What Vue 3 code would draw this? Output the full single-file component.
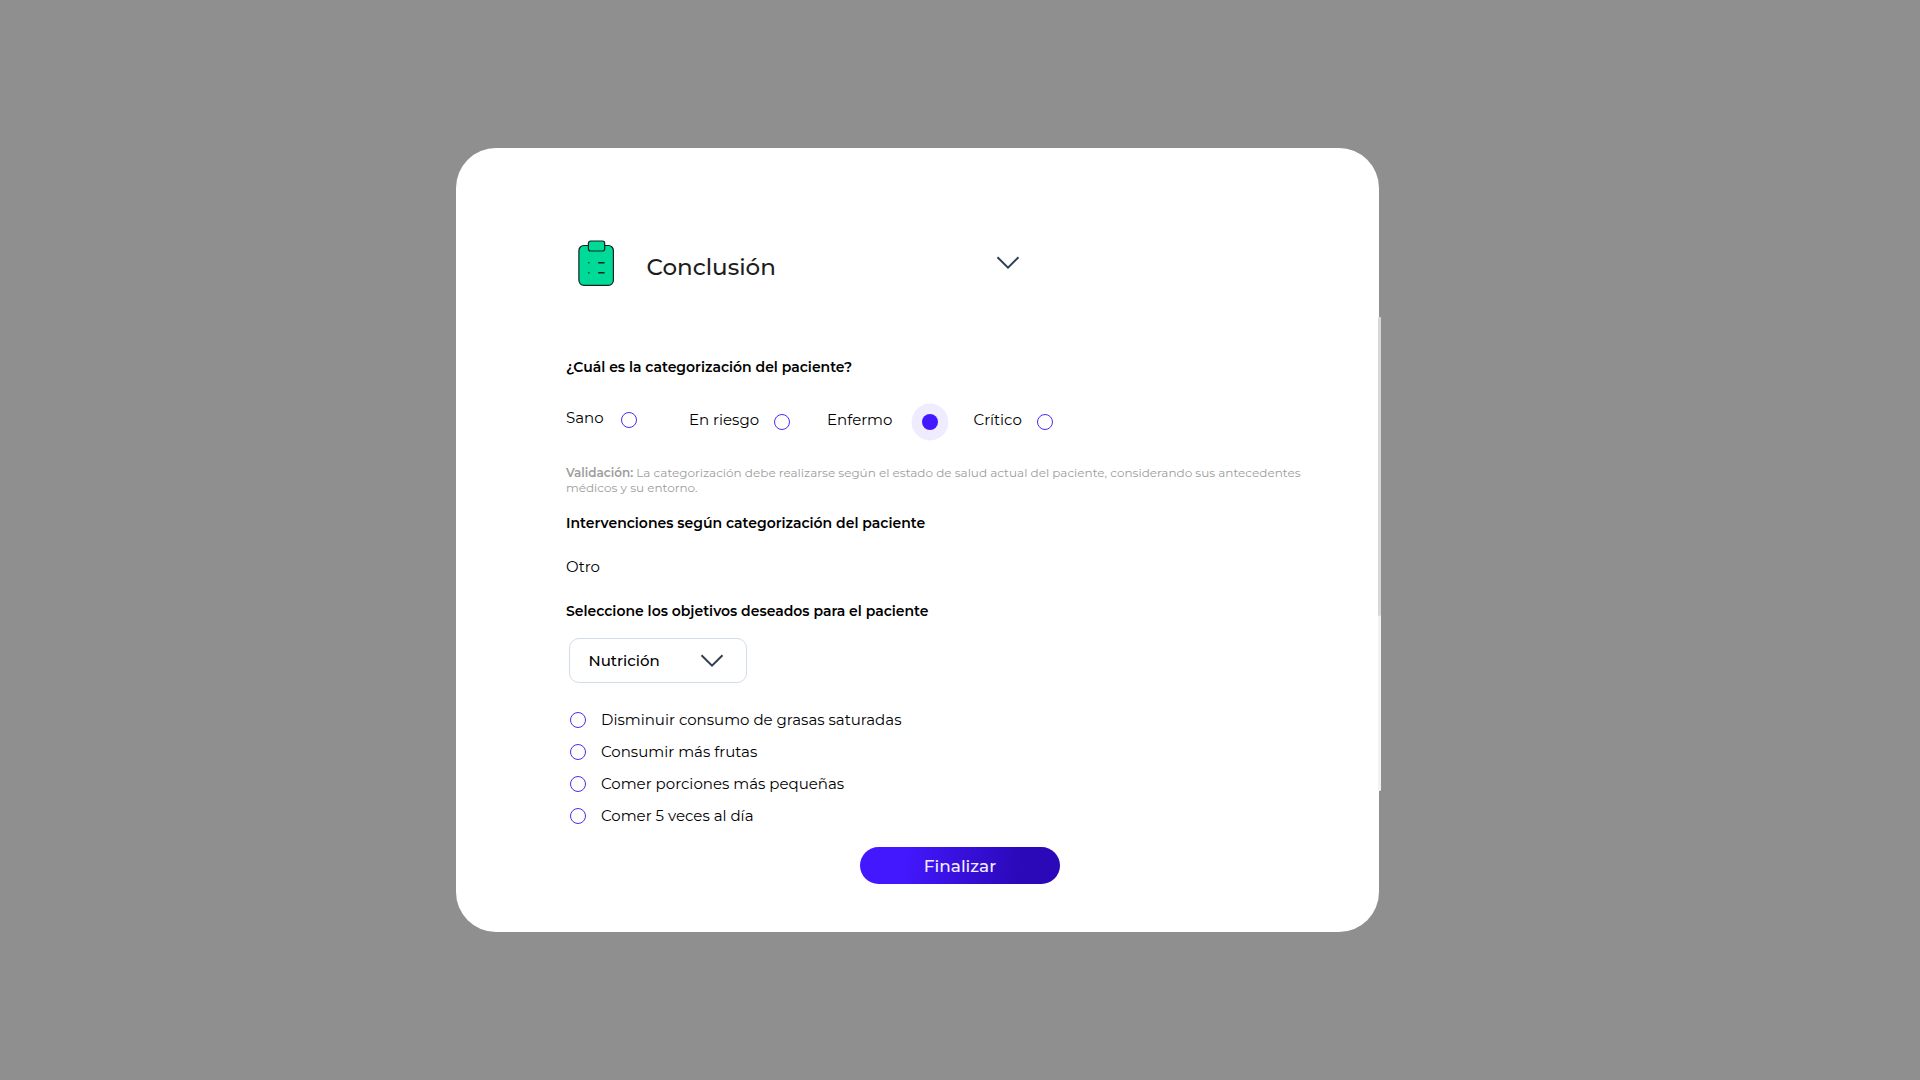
<script setup>
import { ref } from 'vue'

const categories = [
  { id: 'sano', label: 'Sano' },
  { id: 'riesgo', label: 'En riesgo' },
  { id: 'enfermo', label: 'Enfermo' },
  { id: 'critico', label: 'Crítico' },
]
const category = ref('enfermo')

const goals = [
  { id: 'grasas', label: 'Disminuir consumo de grasas saturadas' },
  { id: 'frutas', label: 'Consumir más frutas' },
  { id: 'porciones', label: 'Comer porciones más pequeñas' },
  { id: 'veces', label: 'Comer 5 veces al día' },
]
</script>

<template>
  <main class="backdrop">
    <section class="dialog">
      <header class="head">
        <svg class="clipboard" width="38" height="48" viewBox="0 0 38 48">
          <rect x="1.9" y="5.5" width="34.5" height="39.8" rx="5" />
          <rect x="11.4" y="1" width="16.3" height="10" rx="2.2" />
          <path d="M11.4 22.7h1M21.2 22.7h6.4M11.4 32.7h1M21.2 32.7h6.4" />
        </svg>
        <h1>Conclusión</h1>
        <svg class="chevron" width="24" height="14" viewBox="0 0 24 14">
          <path d="M1.5 1.2 12 11.6 22.5 1.2" />
        </svg>
      </header>

      <h2 class="question">¿Cuál es la categorización del paciente?</h2>
      <div class="categories">
        <div v-for="c in categories" :key="c.id" class="category" :class="c.id" @click="category = c.id">
          <span class="label">{{ c.label }}</span>
          <i class="radio" :class="{ on: category === c.id }"></i>
        </div>
      </div>

      <p class="note">
        <b>Validación:</b> La categorización debe realizarse según el estado de salud actual del paciente, considerando sus antecedentes<br />
        médicos y su entorno.
      </p>

      <h2 class="interventions">Intervenciones según categorización del paciente</h2>
      <p class="other">Otro</p>
      <h2 class="objectives">Seleccione los objetivos deseados para el paciente</h2>

      <div class="select">
        <span>Nutrición</span>
        <svg class="chevron" width="24" height="14" viewBox="0 0 24 14">
          <path d="M1.5 1.2 12 11.6 22.5 1.2" />
        </svg>
      </div>

      <ul class="goals">
        <li v-for="g in goals" :key="g.id">
          <i class="radio"></i>
          <span>{{ g.label }}</span>
        </li>
      </ul>

      <button class="finish">Finalizar</button>

      <div class="track"><div class="thumb"></div></div>
    </section>
  </main>
</template>

<style>
body {
  background: #8f8f8f;
}
</style>

<style scoped>
.backdrop {
  box-sizing: border-box;
  height: 1080px;
  padding: 148px 0 0 456px;
  background: #8f8f8f;
  font-family: Montserrat, Inter, sans-serif;
  color: #000;
}
.dialog {
  position: relative;
  box-sizing: border-box;
  width: 923px;
  height: 784px;
  padding: 92px 70px 0 110px;
  border-radius: 40px;
  background: #fff;
}
h1, h2, p, ul {
  margin: 0;
  padding: 0;
}
.head {
  display: flex;
  height: 48px;
}
.clipboard {
  flex: none;
  margin-left: 11px;
  fill: #00da98;
  stroke: #10231d;
  stroke-width: 1.2;
}
.clipboard path {
  stroke-width: 1.4;
}
h1 {
  width: 348.5px;
  margin: 12px 0 0 31.5px;
  font-size: 23px;
  line-height: 30px;
  font-weight: 500;
  color: #1d1d1d;
}
.chevron {
  flex: none;
  fill: none;
  stroke: #2e4052;
  stroke-width: 2;
}
.head .chevron {
  margin: 16px 0 0 1px;
}
h2 {
  font-size: 14px;
  line-height: 20px;
  font-weight: 600;
  white-space: nowrap;
}
.question {
  margin-top: 69px;
}
.categories {
  display: flex;
  height: 51px;
  margin-top: 31px;
}
.category {
  display: flex;
  margin-top: 2px;
}
.label {
  font-size: 15px;
  line-height: 20px;
  white-space: nowrap;
}
.radio {
  box-sizing: border-box;
  flex: none;
  width: 16px;
  height: 16px;
  border: 1px solid #4d2bf5;
  border-radius: 50%;
}
.radio.on {
  border: 0;
  background: #4318ff;
  box-shadow: 0 0 0 10.4px #f0ecff;
}
.category .radio {
  margin-top: 3.5px;
}
.sano {
  width: 123px;
  margin-top: 0;
}
.sano .label {
  width: 55px;
}
.riesgo {
  width: 138px;
}
.riesgo .label {
  width: 85px;
}
.enfermo {
  width: 146.5px;
}
.enfermo .label {
  width: 95px;
}
.critico .label {
  width: 63.5px;
}
.critico .radio {
  margin-top: 4px;
}
.note {
  margin-top: 6px;
  font-size: 12px;
  line-height: 15px;
  white-space: nowrap;
  color: #9d9d9d;
}
.note b {
  font-weight: 600;
}
.interventions {
  margin-top: 18px;
}
.other {
  margin-top: 24px;
  font-size: 15px;
  line-height: 20px;
}
.objectives {
  margin-top: 24px;
}
.select {
  box-sizing: border-box;
  display: flex;
  align-items: center;
  width: 178px;
  height: 45px;
  margin: 17px 0 0 3px;
  padding-left: 18.5px;
  border: 1px solid #d3dde8;
  border-radius: 10px;
}
.select span {
  width: 111.5px;
  font-size: 15px;
  line-height: 20px;
  font-weight: 500;
}
.goals {
  margin-top: 21px;
  list-style: none;
}
.goals li {
  display: flex;
  align-items: center;
  gap: 15px;
  height: 32px;
  padding-left: 4px;
  font-size: 15px;
}
.goals span {
  line-height: 20px;
  padding-bottom: 1px;
}
.finish {
  display: block;
  width: 200px;
  height: 37px;
  margin: 15px 0 0 294px;
  padding: 0;
  border: 0;
  border-radius: 19px;
  background: linear-gradient(97deg, #4318ff 22%, #2b08b8 80%);
  font: 500 16.9px/38px Montserrat, Inter, sans-serif;
  color: #f1edff;
}
.track {
  position: absolute;
  left: 922px;
  top: 169px;
  width: 3px;
  height: 474px;
  border-radius: 1.5px;
  background: #f2f2f0;
}
.thumb {
  height: 299px;
  border-radius: 1.5px;
  background: #d6d7d7;
}
</style>
